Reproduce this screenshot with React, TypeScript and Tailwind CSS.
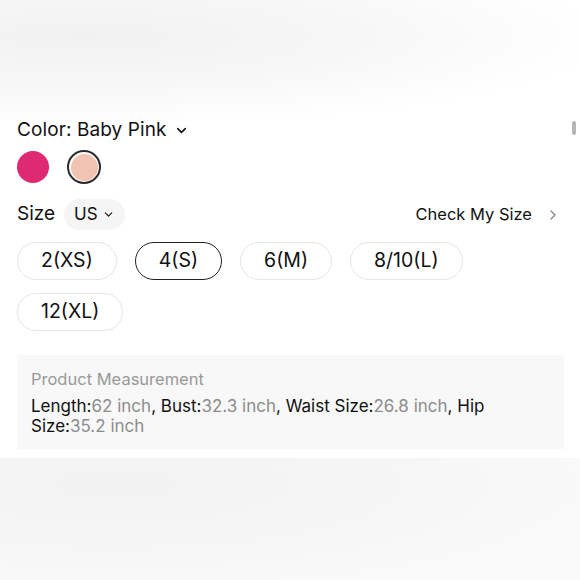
import { ChevronDown, ChevronRight } from "lucide-react";

const sizes = ["2(XS)", "4(S)", "6(M)", "8/10(L)", "12(XL)"];

export default function App() {
  return (
    <div className="relative h-[580px] w-[580px] overflow-hidden bg-white font-['Inter',sans-serif] text-[#111]">
      {/* blurred photo above */}
      <div className="h-[121px] bg-[radial-gradient(ellipse_at_15%_30%,#f1f1f1_0%,#f7f7f7_40%,#ffffff_75%)]" />

      <div className="px-[17px]">
        <div className="flex items-center gap-[7px] text-[19px] leading-[18px] tracking-[0.005em]">
          <span>Color: Baby Pink</span>
          <ChevronDown className="h-[15px] w-[15px]" strokeWidth={2.5} />
        </div>

        <div className="mt-[11px] flex items-center gap-[18px]">
          <div className="h-[32px] w-[32px] rounded-full bg-[#de2a73]" />
          <div className="flex h-[34px] w-[34px] items-center justify-center rounded-full border-2 border-[#2a2a2a] bg-white">
            <div className="h-[27px] w-[27px] rounded-full bg-[#f1c3b1]" />
          </div>
        </div>

        <div className="mt-[15px] flex items-center justify-between">
          <div className="flex items-center gap-[9px]">
            <span className="text-[19px]">Size</span>
            <div className="flex h-[31px] items-center gap-[4px] rounded-full bg-[#f5f5f5] px-[10px] text-[17px]">
              <span>US</span>
              <ChevronDown className="h-[13px] w-[13px]" strokeWidth={2} />
            </div>
          </div>
          <div className="flex items-center gap-[13px] pr-[2px] text-[16.5px]">
            <span>Check My Size</span>
            <ChevronRight className="h-[16px] w-[16px] text-[#888]" strokeWidth={2} />
          </div>
        </div>

        <div className="mt-[12px] flex flex-wrap gap-x-[18px] gap-y-[13px] pr-[60px]">
          {sizes.map((s) => (
            <div
              key={s}
              className={
                s === "4(S)"
                  ? "flex h-[38px] items-center justify-center rounded-full border border-[#222] px-[23px] text-[19.5px]"
                  : "flex h-[38px] items-center justify-center rounded-full border border-[#e6e6e6] px-[23px] text-[19.5px]"
              }
            >
              {s}
            </div>
          ))}
        </div>

        <div className="mt-[24px] w-[547px] bg-[#f8f8f8] px-[14px] pb-[13px] pt-[14px]">
          <div className="text-[16.5px] leading-[20px] text-[#999]">Product Measurement</div>
          <div className="mt-[7px] text-[17px] leading-[20px]">
            Length:<span className="text-[#8c8c8c]">62 inch</span>, Bust:
            <span className="text-[#8c8c8c]">32.3 inch</span>, Waist Size:
            <span className="text-[#8c8c8c]">26.8 inch</span>, Hip Size:
            <span className="text-[#8c8c8c]">35.2 inch</span>
          </div>
        </div>
      </div>

      {/* blurred photo below */}
      <div className="mt-[9px] h-[130px] bg-[radial-gradient(ellipse_at_20%_20%,#f2f2f2_0%,#f6f6f6_45%,#fafafa_80%)]" />

      {/* scroll indicator */}
      <div className="absolute right-[4px] top-[121px] h-[14px] w-[4px] rounded-full bg-[#b5b5b5]" />
    </div>
  );
}
